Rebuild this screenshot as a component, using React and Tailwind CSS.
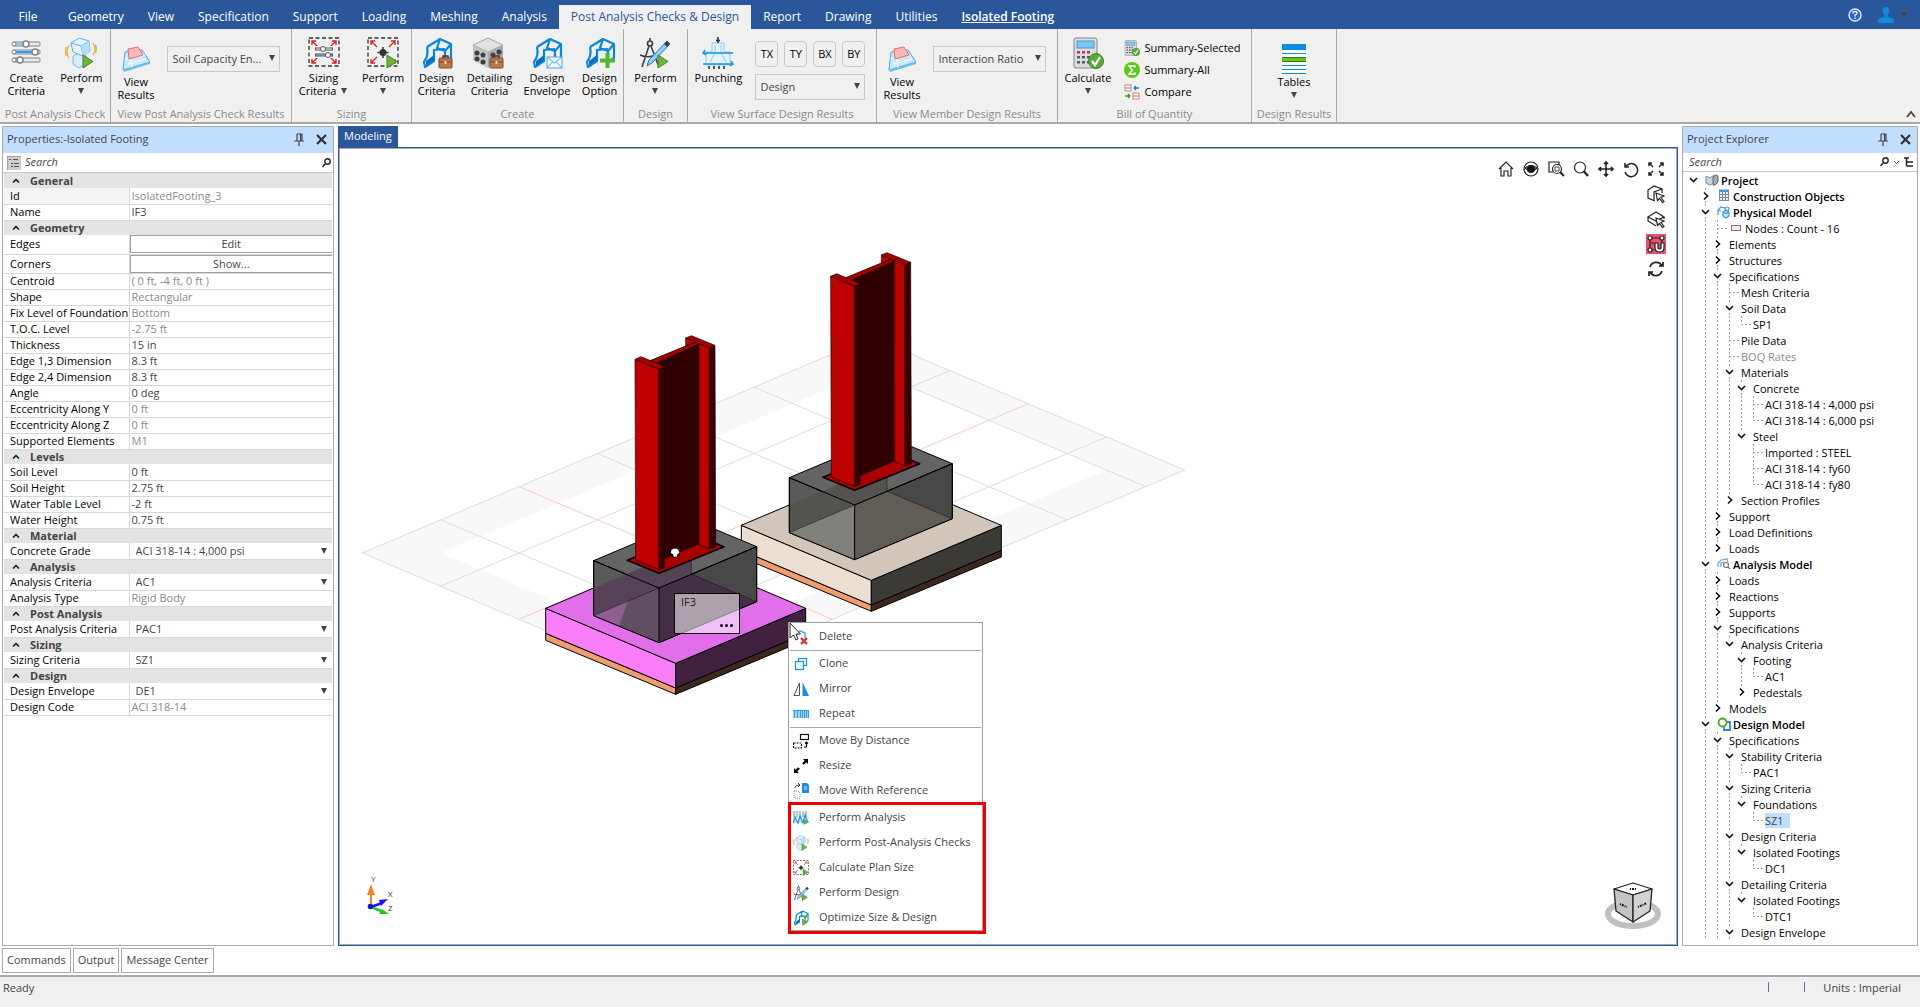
import { useState } from 'react'
import { clsx } from 'clsx'

const TABS = [
  'Geometry', 'View', 'Specification', 'Support', 'Loading', 'Meshing', 'Analysis',
  'Post Analysis Checks & Design', 'Report', 'Drawing', 'Utilities', 'Isolated Footing',
]

// kind: button | select | undefined (plain), dim = read only value
const PROPERTIES = [
  { title: 'General', rows: [
    { label: 'Id', value: 'IsolatedFooting_3', dim: true, active: true },
    { label: 'Name', value: 'IF3' },
  ] },
  { title: 'Geometry', rows: [
    { label: 'Edges', value: 'Edit', kind: 'button' },
    { label: 'Corners', value: 'Show...', kind: 'button' },
    { label: 'Centroid', value: '( 0 ft, -4 ft, 0 ft )', dim: true },
    { label: 'Shape', value: 'Rectangular', dim: true },
    { label: 'Fix Level of Foundation', value: 'Bottom', dim: true },
    { label: 'T.O.C. Level', value: '-2.75 ft', dim: true },
    { label: 'Thickness', value: '15 in' },
    { label: 'Edge 1,3 Dimension', value: '8.3 ft' },
    { label: 'Edge 2,4 Dimension', value: '8.3 ft' },
    { label: 'Angle', value: '0 deg' },
    { label: 'Eccentricity Along Y', value: '0 ft', dim: true },
    { label: 'Eccentricity Along Z', value: '0 ft', dim: true },
    { label: 'Supported Elements', value: 'M1', dim: true },
  ] },
  { title: 'Levels', rows: [
    { label: 'Soil Level', value: '0 ft' },
    { label: 'Soil Height', value: '2.75 ft' },
    { label: 'Water Table Level', value: '-2 ft' },
    { label: 'Water Height', value: '0.75 ft' },
  ] },
  { title: 'Material', rows: [{ label: 'Concrete Grade', value: 'ACI 318-14 : 4,000 psi', kind: 'select' }] },
  { title: 'Analysis', rows: [
    { label: 'Analysis Criteria', value: 'AC1', kind: 'select' },
    { label: 'Analysis Type', value: 'Rigid Body', dim: true },
  ] },
  { title: 'Post Analysis', rows: [{ label: 'Post Analysis Criteria', value: 'PAC1', kind: 'select' }] },
  { title: 'Sizing', rows: [{ label: 'Sizing Criteria', value: 'SZ1', kind: 'select' }] },
  { title: 'Design', rows: [
    { label: 'Design Envelope', value: 'DE1', kind: 'select' },
    { label: 'Design Code', value: 'ACI 318-14', dim: true },
  ] },
]

// [level, label, state, icon] where state is open | closed | leaf
const TREE = [
  [0, 'Project', 'open', 'project'],
  [1, 'Construction Objects', 'closed', 'construction'],
  [1, 'Physical Model', 'open', 'physical'],
  [2, 'Nodes : Count - 16', 'leaf', 'nodes'],
  [2, 'Elements', 'closed'],
  [2, 'Structures', 'closed'],
  [2, 'Specifications', 'open'],
  [3, 'Mesh Criteria', 'leaf'],
  [3, 'Soil Data', 'open'],
  [4, 'SP1', 'leaf'],
  [3, 'Pile Data', 'leaf'],
  [3, 'BOQ Rates', 'leaf'],
  [3, 'Materials', 'open'],
  [4, 'Concrete', 'open'],
  [5, 'ACI 318-14 : 4,000 psi', 'leaf'],
  [5, 'ACI 318-14 : 6,000 psi', 'leaf'],
  [4, 'Steel', 'open'],
  [5, 'Imported : STEEL', 'leaf'],
  [5, 'ACI 318-14 : fy60', 'leaf'],
  [5, 'ACI 318-14 : fy80', 'leaf'],
  [3, 'Section Profiles', 'closed'],
  [2, 'Support', 'closed'],
  [2, 'Load Definitions', 'closed'],
  [2, 'Loads', 'closed'],
  [1, 'Analysis Model', 'open', 'analysis'],
  [2, 'Loads', 'closed'],
  [2, 'Reactions', 'closed'],
  [2, 'Supports', 'closed'],
  [2, 'Specifications', 'open'],
  [3, 'Analysis Criteria', 'open'],
  [4, 'Footing', 'open'],
  [5, 'AC1', 'leaf'],
  [4, 'Pedestals', 'closed'],
  [2, 'Models', 'closed'],
  [1, 'Design Model', 'open', 'design'],
  [2, 'Specifications', 'open'],
  [3, 'Stability Criteria', 'open'],
  [4, 'PAC1', 'leaf'],
  [3, 'Sizing Criteria', 'open'],
  [4, 'Foundations', 'open'],
  [5, 'SZ1', 'leaf'],
  [3, 'Design Criteria', 'open'],
  [4, 'Isolated Footings', 'open'],
  [5, 'DC1', 'leaf'],
  [3, 'Detailing Criteria', 'open'],
  [4, 'Isolated Footings', 'open'],
  [5, 'DTC1', 'leaf'],
  [3, 'Design Envelope', 'open'],
]

// true when another node of the same level follows under the same parent
function continues(index, level) {
  for (let i = index + 1; i < TREE.length; i++) {
    if (TREE[i][0] === level) return true
    if (TREE[i][0] < level) return false
  }
  return level <= 3
}

/* ---------- small shared pieces ---------- */

function Caret({ className }) {
  return (
    <svg width="8" height="6" viewBox="0 0 8 6" className={className} aria-hidden="true">
      <path d="M1 0h6L4 6z" fill="#444" />
    </svg>
  )
}

function PlayBadge({ x = 19, y = 18 }) {
  return <path d={`M${x} ${y}v13l10-6.5z`} fill="#6fb43c" stroke="#3f8a1e" strokeLinejoin="round" />
}

/* ---------- ribbon icons ---------- */

function SlidersIcon() {
  return (
    <svg width="32" height="32" viewBox="0 0 32 32">
      {[[7, 16, false], [15, 25, true], [23, 10, false]].map(([y, x, full]) => (
        <g key={y} stroke="#7c858c" fill="#fff">
          <rect x="3" y={y - 2} width="27" height="4" rx="1" fill="#e8eaec" />
          <rect x="6" y={y - 1} width={x - 6} height="2" stroke="none" fill={full ? '#2f9be6' : '#8cc8f0'} />
          <circle cx="4" cy={y} r="2" />
          <circle cx={x} cy={y} r="3" strokeWidth="1.5" />
        </g>
      ))}
    </svg>
  )
}

function CubesPlayIcon({ size = 32 }) {
  return (
    <svg width={size} height={size} viewBox="0 0 32 32">
      <g fill="none" stroke="#f0b050" strokeWidth="1.4">
        <path d="M4 8q-4 7 0 13M1.500 10q-2 5 0 9M28 6q4 6 0 12M30.500 8q2 4 0 8" />
      </g>
      <path d="M8 19l6-3 7 3v8l-7 4-6-4z" fill="#d6edfb" stroke="#74b9e6" />
      <path d="M6 6l8-5 10 3 1 10-7 5-10-4z" fill="#e6f5fe" stroke="#5eb0e6" />
      <path d="M6 6l10 3 8-5M16 9l2 10" fill="none" stroke="#5eb0e6" />
      <path d="M16 9l8-5 1 10-7 5z" fill="#b5defa" />
      <PlayBadge x={18} y={18} />
    </svg>
  )
}

function ViewResultsIcon() {
  return (
    <svg width="32" height="26" viewBox="0 0 32 26">
      <path d="M5 6l17-2 8 12-27 8z" fill="#cbe9fb" stroke="#46a9e4" strokeLinejoin="round" />
      <path d="M3 24l27-8v2L4 26z" fill="#6cc0f0" />
      <path d="M8 18l18-5M10 7l2 15M4.500 13l20-4" stroke="#fff" fill="none" />
      <path d="M8 3l10-2 5 8-14 4z" fill="#fbb9b9" stroke="#e26a6a" strokeLinejoin="round" />
    </svg>
  )
}

function SizingFrame() {
  return (
    <>
      <rect x="1" y="1" width="30" height="28" fill="none" stroke="#333" strokeWidth="1.300" strokeDasharray="4 2.500" />
      <g stroke="#d22" strokeWidth="1.400" fill="none">
        <path d="M10 10L4 4M4 8V4h4M22 10l6-6M24 4h4v4M10 20l-6 6M4 22v4h4M22 20l6 6M28 22v4h-4" />
      </g>
    </>
  )
}

function SizingCriteriaIcon() {
  return (
    <svg width="32" height="32" viewBox="0 0 32 32">
      <SizingFrame />
      <rect x="6" y="9" width="20" height="12" fill="#f0f0f0" />
      <g stroke="#555" fill="#fff">
        <rect x="7.500" y="11" width="17" height="2" />
        <rect x="7.500" y="17" width="17" height="2" fill="#6ec0ee" />
        <circle cx="15" cy="12" r="2.500" /><circle cx="20" cy="18" r="2.500" />
      </g>
    </svg>
  )
}

function SizingPerformIcon({ size = 32 }) {
  return (
    <svg width={size} height={size} viewBox="0 0 32 32">
      <SizingFrame />
      <path d="M16 10v11M10.500 15.500h11" stroke="#333" strokeWidth="1.500" />
      <circle cx="16" cy="15.500" r="3.500" fill="#333" />
      <PlayBadge x={20} y={18} />
    </svg>
  )
}

function FrameShape() {
  return (
    <>
      <path d="M6 10L19 2l11 5v14l-6 4M19 2l-3 9 8 3 6-7M24 14v8" fill="none" stroke="#0b86dc" strokeWidth="2.200" strokeLinejoin="round" />
      <path d="M6 10q2 8-3 15l1 5 9-6V13l11-1" fill="none" stroke="#0b86dc" strokeWidth="2.200" strokeLinejoin="round" />
      <path d="M5 24l8-6v5l-8 6z" fill="#0b6fc0" />
    </>
  )
}

function Briefcase() {
  return (
    <g>
      <path d="M22 21v-2h5v2" fill="none" stroke="#5c3218" strokeWidth="1.500" />
      <rect x="18" y="21" width="13" height="10" rx="1" fill="#b9794f" stroke="#7d4a28" />
      <path d="M18 25h13" stroke="#7d4a28" /><rect x="23.500" y="24" width="2" height="3" fill="#f3d9a4" />
    </g>
  )
}

function DesignIcon({ badge, size = 32 }) {
  return (
    <svg width={size} height={size} viewBox="0 0 32 32">
      <FrameShape />
      {badge === 'case' && <Briefcase />}
      {badge === 'mail' && (
        <g fill="#eef8ff" stroke="#4aa9e6"><rect x="16" y="20" width="15" height="11" /><path d="M16 20l7.500 6 7.500-6M16 31l5.500-6M31 31l-5.500-6" fill="none" /></g>
      )}
      {badge === 'plus' && <path d="M23.500 16v15M16 23.500h15" stroke="#54b52c" strokeWidth="4" />}
      {badge === 'play' && <><path d="M20 12l4 4 7-8" fill="none" stroke="#54b52c" strokeWidth="3" /><PlayBadge /></>}
    </svg>
  )
}

function DetailingIcon() {
  return (
    <svg width="34" height="32" viewBox="0 0 34 32">
      <path d="M16 1l15 7v15l-15 8-15-8V8z" fill="#c3c6c9" />
      <path d="M16 1l15 7-15 7L1 8z" fill="#dfe1e3" stroke="#a7abae" />
      <path d="M16 15v16l15-8V8z" fill="#a9adb1" />
      <g fill="#3d4144">
        <circle cx="5" cy="16" r="2.500" /><circle cx="11" cy="18" r="2.500" /><circle cx="5" cy="22" r="2.500" /><circle cx="11" cy="25" r="2.500" />
        <circle cx="21" cy="18" r="2.500" /><circle cx="27" cy="15" r="2.500" />
      </g>
      <Briefcase />
    </svg>
  )
}

function CompassIcon({ size = 32 }) {
  return (
    <svg width={size} height={size} viewBox="0 0 32 32">
      <g fill="none" stroke="#3b4046" strokeWidth="1.600">
        <path d="M11 1v3M10 9L3 30M12 9l8 21M1 18q9 4 19-1" />
        <circle cx="11" cy="6.500" r="2.500" />
      </g>
      <path d="M28 4l3 3L13 26l-5 3 2-6z" fill="#8cd0f8" stroke="#2878b8" />
      <path d="M28 4l3 3-3 3-3-3z" fill="#3b4046" />
      <PlayBadge />
    </svg>
  )
}

function PunchingIcon() {
  return (
    <svg width="32" height="32" viewBox="0 0 32 32">
      <path d="M10 6h12v9h6v13H4V15h6z" fill="#e2f3fd" stroke="#8acbf2" />
      <path d="M13 8v8l-5 9M19 8v8l5 9" fill="none" stroke="#8acbf2" />
      <path d="M1 16h30M1 27h30M3 13l-2 3 3 2M29 24l2 3-3 2" fill="none" stroke="#1c8fdb" strokeWidth="1.400" />
      <path d="M16 0v6M14 3.500h4" stroke="#234" strokeWidth="1.600" />
      <path d="M7 29v3M12 29v3M17 29v3M22 29v3" stroke="#234" strokeWidth="1.600" />
    </svg>
  )
}

function CalculatorIcon({ size = 32 }) {
  return (
    <svg width={size} height={size} viewBox="0 0 32 32">
      <rect x="2" y="1" width="23" height="30" rx="2" fill="#d9dde0" stroke="#7f878e" />
      <rect x="5" y="4" width="17" height="7" fill="#7cc6f3" stroke="#4c98c8" />
      {[14, 19, 24].map((y) => [5, 10, 15].map((x) => (
        <rect key={`${x}-${y}`} x={x} y={y} width="3" height="2.500" fill={y === 14 ? '#c83434' : '#555c62'} />
      )))}
      <circle cx="24" cy="24" r="7.500" fill="#5aa83a" stroke="#3f8028" />
      <path d="M20 24l3 4 5-8" fill="none" stroke="#fff" strokeWidth="2.200" />
    </svg>
  )
}

function SigmaIcon() {
  return (
    <svg width="16" height="16" viewBox="0 0 16 16">
      <circle cx="8" cy="8" r="8" fill="#5cc81e" />
      <path d="M11 5.500V4H5l3.500 4L5 12h6v-1.500" fill="none" stroke="#fff" strokeWidth="1.400" />
    </svg>
  )
}

function CompareIcon() {
  return (
    <svg width="16" height="16" viewBox="0 0 16 16">
      <rect x="1" y="1" width="6" height="6" fill="#fff" stroke="#e07878" /><path d="M1 4h6" stroke="#888" />
      <rect x="9" y="9" width="6" height="6" fill="#fff" stroke="#e07878" /><path d="M9 12h6" stroke="#888" />
      <path d="M15 4h-5M12 2l-2 2 2 2" stroke="#1c7fc8" fill="none" strokeWidth="1.300" />
      <path d="M1 12h5M4 10l2 2-2 2" stroke="#3f9a1e" fill="none" strokeWidth="1.300" />
    </svg>
  )
}

function TablesIcon() {
  return (
    <svg width="24" height="30" viewBox="0 0 24 30" shapeRendering="crispEdges">
      <rect width="24" height="30" fill="#fff" />
      <rect width="24" height="6" fill="#0c8ce0" />
      <path d="M0 9.500h24M0 21.500h24M0 25.500h24M0 29.500h24" stroke="#0c8ce0" />
      <rect y="13" width="24" height="5" fill="#35791a" />
      <rect y="14" width="24" height="3" fill="#5cc81e" />
    </svg>
  )
}

/* ---------- ribbon ---------- */

function RibbonGroup({ title, width, children }) {
  return (
    <section className={clsx('flex shrink-0 flex-col border-r border-[#a9a9a9]', width)}>
      <div className="flex h-[77px] justify-around">{children}</div>
      <h2 className="text-center text-[11px] leading-4 whitespace-nowrap text-[#8a8a8a]">{title}</h2>
    </section>
  )
}

// arrow: 'below' puts the caret on its own line, 'inline' after the last word
function RibbonButton({ icon, lines, arrow, low }) {
  return (
    <button className={clsx('flex flex-col items-center text-[11px] leading-[13px] text-black hover:bg-[#d5e5f7]', low ? 'pt-[14px]' : 'pt-[6px]')}>
      <span className={clsx('flex items-center justify-center', low ? 'h-8' : 'h-[36px]')}>{icon}</span>
      {lines.map((line, i) => (
        <span key={line} className="flex items-center gap-1 whitespace-nowrap">
          {line}
          {arrow === 'inline' && i === lines.length - 1 && <Caret />}
        </span>
      ))}
      {arrow === 'below' && <Caret className="mt-1" />}
    </button>
  )
}

function Combo({ label, value, className }) {
  return (
    <span className={clsx('relative block h-[26px]', className)}>
      <select aria-label={label} className="h-full w-full appearance-none border border-[#c8c8c8] bg-[#f0f0f0] pr-3 pl-1 text-[11px] text-[#444]">
        <option>{value}</option>
      </select>
      <Caret className="pointer-events-none absolute top-2.5 right-1" />
    </span>
  )
}

function TitleBar() {
  const [active, setActive] = useState('Post Analysis Checks & Design')
  return (
    <header className="flex h-[29px] items-end bg-[#2a579a] text-xs text-white">
      <button className="h-6 w-14">File</button>
      <nav className="flex flex-1 items-end">
        {TABS.map((tab) => (
          <button
            key={tab}
            onClick={() => setActive(tab)}
            className={clsx(
              'h-6 px-3 whitespace-nowrap',
              tab === active && 'bg-[#f0f0f0] text-[#2a579a]',
              tab === 'Isolated Footing' && 'font-semibold underline',
            )}
          >
            {tab}
          </button>
        ))}
      </nav>
      <div className="flex h-full items-center gap-4 pr-3">
        <button aria-label="Help">
          <svg width="14" height="14" viewBox="0 0 14 14">
            <circle cx="7" cy="7" r="6" fill="#2a62d8" stroke="#dfe8f8" strokeWidth="1.500" />
            <path d="M5 5.500q0-2 2-2t2 1.700q0 1-2 2V8.500M7 9.500v1.500" stroke="#fff" strokeWidth="1.300" fill="none" />
          </svg>
        </button>
        <button aria-label="Account" className="flex items-center gap-1.5">
          <svg width="16" height="16" viewBox="0 0 16 16" fill="#0c8ce0">
            <path d="M8 0q4 0 3.500 4.500Q11 7 9.500 8v2q6 1 6.500 3v3H0v-3q.5-2 6.500-3V8Q5 7 4.500 4.500 4 0 8 0z" />
          </svg>
          <Caret />
        </button>
      </div>
    </header>
  )
}

function Ribbon() {
  return (
    <div className="flex h-[95px] border-b-2 border-[#a9a9a9] bg-[#f0f0f0]">
      <RibbonGroup title="Post Analysis Check" width="w-[111px]">
        <RibbonButton icon={<SlidersIcon />} lines={['Create', 'Criteria']} />
        <RibbonButton icon={<CubesPlayIcon />} lines={['Perform']} arrow="below" />
      </RibbonGroup>
      <RibbonGroup title="View Post Analysis Check Results" width="w-[181px]">
        <RibbonButton icon={<ViewResultsIcon />} lines={['View', 'Results']} low />
        <Combo label="Post analysis result" value="Soil Capacity En..." className="mt-4 mr-1 w-[113px]" />
      </RibbonGroup>
      <RibbonGroup title="Sizing" width="w-[120px]">
        <RibbonButton icon={<SizingCriteriaIcon />} lines={['Sizing', 'Criteria']} arrow="inline" />
        <RibbonButton icon={<SizingPerformIcon />} lines={['Perform']} arrow="below" />
      </RibbonGroup>
      <RibbonGroup title="Create" width="w-[212px]">
        <RibbonButton icon={<DesignIcon badge="case" />} lines={['Design', 'Criteria']} />
        <RibbonButton icon={<DetailingIcon />} lines={['Detailing', 'Criteria']} />
        <RibbonButton icon={<DesignIcon badge="mail" />} lines={['Design', 'Envelope']} />
        <RibbonButton icon={<DesignIcon badge="plus" />} lines={['Design', 'Option']} />
      </RibbonGroup>
      <RibbonGroup title="Design" width="w-16">
        <RibbonButton icon={<CompassIcon />} lines={['Perform']} arrow="below" />
      </RibbonGroup>
      <RibbonGroup title="View Surface Design Results" width="w-[189px]">
        <RibbonButton icon={<PunchingIcon />} lines={['Punching']} />
        <div className="mr-1 flex w-[110px] flex-col gap-1.5 pt-3">
          <div className="flex justify-between">
            {['TX', 'TY', 'BX', 'BY'].map((t) => (
              <button key={t} className="h-[26px] w-[23px] rounded-sm border border-[#c8c8c8] text-[11px] text-black">{t}</button>
            ))}
          </div>
          <Combo label="Surface result" value="Design" />
        </div>
      </RibbonGroup>
      <RibbonGroup title="View Member Design Results" width="w-[181px]">
        <RibbonButton icon={<ViewResultsIcon />} lines={['View', 'Results']} low />
        <Combo label="Member result" value="Interaction Ratio" className="mt-4 mr-1 w-[113px]" />
      </RibbonGroup>
      <RibbonGroup title="Bill of Quantity" width="w-[194px]">
        <RibbonButton icon={<CalculatorIcon />} lines={['Calculate']} arrow="below" />
        <div className="mr-1 flex flex-col gap-1.5 pt-[11px] text-[11px] leading-4 text-black">
          <button className="flex items-center gap-1"><CalculatorIcon size={16} />Summary-Selected</button>
          <button className="flex items-center gap-1"><SigmaIcon />Summary-All</button>
          <button className="flex items-center gap-1"><CompareIcon />Compare</button>
        </div>
      </RibbonGroup>
      <RibbonGroup title="Design Results" width="w-[85px]">
        <RibbonButton icon={<TablesIcon />} lines={['Tables']} arrow="below" low />
      </RibbonGroup>
      <button aria-label="Collapse ribbon" className="mt-auto mr-1 mb-1 ml-auto">
        <svg width="10" height="8" viewBox="0 0 10 8"><path d="M1 7l4-5 4 5" fill="none" stroke="#444" strokeWidth="1.800" /></svg>
      </button>
    </div>
  )
}

/* ---------- panels ---------- */

function PanelHeader({ title }) {
  return (
    <div className="flex h-[26px] shrink-0 items-center bg-[#c2deff] pr-1.5 pb-0.5 pl-1">
      <h2 className="flex-1 text-[11px] text-[#444]">{title}</h2>
      <button aria-label="Pin" className="mr-3">
        <svg width="10" height="13" viewBox="0 0 10 13" fill="none" stroke="#444" strokeWidth="1.200">
          <path d="M3 1h5v7M3 1v7M6.500 1v7M0 8h10M5 8v5" />
        </svg>
      </button>
      <button aria-label="Close">
        <svg width="11" height="11" viewBox="0 0 11 11"><path d="M1 1l9 9M10 1l-9 9" stroke="#333" strokeWidth="2.200" /></svg>
      </button>
    </div>
  )
}

function MagnifierIcon() {
  return (
    <svg width="9" height="10" viewBox="0 0 9 10" fill="none" stroke="#222" strokeWidth="1.400">
      <circle cx="5.500" cy="3.500" r="2.700" /><path d="M3.500 5.500L.5 9" />
    </svg>
  )
}

function PropertyValue({ row }) {
  if (row.kind === 'button') {
    return <button className="block h-[18px] w-full border border-r-0 border-[#a0a0a0] text-[#444]">{row.value}</button>
  }
  if (row.kind === 'select') {
    return (
      <span className="relative block h-[14px]">
        <select aria-label={row.label} className="block h-full w-full appearance-none pl-1.5 text-[#444]">
          <option>{row.value}</option>
        </select>
        <Caret className="pointer-events-none absolute top-1 right-1" />
      </span>
    )
  }
  return <span className={clsx('pl-0.5', row.dim ? 'text-[#8a8a8a]' : 'text-[#444]')}>{row.value}</span>
}

function PropertiesPanel() {
  return (
    <aside className="flex w-[332px] shrink-0 flex-col border border-[#a9a9a9] bg-white">
      <PanelHeader title="Properties:-Isolated Footing" />
      <div className="flex h-[20px] shrink-0 items-center gap-1 border-b border-[#c8c8c8] pr-0.5 pl-1">
        <svg width="14" height="14" viewBox="0 0 14 14" shapeRendering="crispEdges">
          <rect width="14" height="14" fill="#cdcdcd" stroke="#a0a0a0" />
          <path d="M2 3.500h2M6 3.500h5M4 7.500h2M7 7.500h5M4 10.500h2M7 10.500h5" stroke="#555" />
        </svg>
        <input aria-label="Search properties" placeholder="Search" className="min-w-0 flex-1 text-[11px] italic placeholder:text-[#444] focus:outline-none" />
        <MagnifierIcon />
      </div>
      <table className="mx-px table-fixed border-collapse text-left text-[11px] leading-[14px]">
        <colgroup><col className="w-[125px]" /><col /></colgroup>
        {PROPERTIES.map((group) => (
          <tbody key={group.title}>
            <tr className="h-[15px] bg-[#e3e3e3]">
              <th colSpan={2} className="p-0 font-bold text-[#444]">
                <span className="flex h-[14px] items-center gap-2.5 pl-2">
                  <svg width="8" height="5" viewBox="0 0 8 5"><path d="M1 4.500l3-3 3 3" fill="none" stroke="#111" strokeWidth="1.500" /></svg>
                  {group.title}
                </span>
              </th>
            </tr>
            {group.rows.map((row) => (
              <tr key={row.label} className={clsx('border-b border-[#d8d8d8]', row.kind === 'button' ? 'h-[19px]' : 'h-4')}>
                <th className={clsx('border-r border-[#d8d8d8] p-0 pl-1.5 font-normal whitespace-nowrap text-black', row.active && 'bg-[#f4f4f4]')}>{row.label}</th>
                <td className="p-0">
                  <PropertyValue row={row} />
                </td>
              </tr>
            ))}
          </tbody>
        ))}
      </table>
    </aside>
  )
}

const TREE_ICONS = {
  project: (
    <svg width="14" height="14" viewBox="0 0 14 14">
      <path d="M1 3l4 2 4-3v8l-4 2-4-2z" fill="#c6d4de" stroke="#7d8c97" /><path d="M8 4l3-2 2 1v6l-3 3H8z" fill="#a3abb1" stroke="#666" />
    </svg>
  ),
  construction: (
    <svg width="14" height="14" viewBox="0 0 14 14" fill="none" stroke="#7d8c97">
      <rect x="2.500" y="2.500" width="9" height="9" fill="#e5eef5" /><path d="M2 1.500h10" stroke="#3c9be0" strokeWidth="2" /><path d="M2.500 5.500h9M2.500 8.500h9M5.500 3v9M8.500 3v9" />
    </svg>
  ),
  physical: (
    <svg width="14" height="14" viewBox="0 0 14 14" fill="none" stroke="#3c9be0" strokeWidth="1.200">
      <path d="M1 10V5l3-3 4 1M1 5l3 1" /><path d="M6 7l3-2 3 2v4l-3 2-3-2z" fill="#bfe2fa" /><path d="M6 7l3 1.500L12 7" /><circle cx="10" cy="4" r="2" />
    </svg>
  ),
  nodes: (
    <svg width="14" height="14" viewBox="0 0 14 14"><rect x="2.500" y="4.500" width="9" height="5" fill="#eee" stroke="#8c7070" /><path d="M2.500 4v6M11.500 4v6" stroke="#c05a5a" /></svg>
  ),
  analysis: (
    <svg width="14" height="14" viewBox="0 0 14 14" fill="none" stroke="#6aa9d4" strokeWidth="1.200">
      <path d="M1 10V6l3-3 6-1 1 3M4 10V6l3-1" /><circle cx="9" cy="8" r="2.500" stroke="#777" /><path d="M11 10l2 2" stroke="#777" />
    </svg>
  ),
  design: (
    <svg width="14" height="14" viewBox="0 0 14 14" fill="none" strokeWidth="1.800"><path d="M10 5h3v8H7v-3" stroke="#2a86d8" /><circle cx="5.500" cy="5.500" r="4" stroke="#4aa824" fill="#fff" /></svg>
  ),
}

function TreeRow({ index }) {
  const [level, label, state, icon] = TREE[index]
  const more = continues(index, level)
  const ancestors = Array.from({ length: level }, (_, k) => k > 0 && continues(index, k))
  const guide = { stroke: '#a0a0a0', strokeDasharray: '2 2', fill: 'none' }
  return (
    <li className="flex h-4 items-center whitespace-nowrap">
      {ancestors.map((on, k) => (
        <svg key={k} width="12" height="16" className="shrink-0">{on && <path d="M6.500 0v16" {...guide} />}</svg>
      ))}
      <svg width="18" height="16" viewBox="0 0 18 16" className="shrink-0">
        {level > 0 && state === 'leaf' && <path d={more ? 'M6.500 0v16M6 8.500h11' : 'M6.500 0v8.500h11'} {...guide} />}
        {level > 0 && state !== 'leaf' && <path d={more ? 'M6.500 0v3M6.500 13v3' : 'M6.500 0v3'} {...guide} />}
        {state === 'open' && <path d="M3 6l3.500 3.500L10 6" fill="none" stroke="#111" strokeWidth="1.600" />}
        {state === 'closed' && <path d="M5 4.500L8.500 8 5 11.500" fill="none" stroke="#111" strokeWidth="1.600" />}
      </svg>
      {icon && <span className="mr-0.5 shrink-0">{TREE_ICONS[icon]}</span>}
      <span
        className={clsx(
          icon && icon !== 'nodes' && 'font-semibold',
          label === 'BOQ Rates' && 'text-[#8a8a8a]',
          label === 'SZ1' && 'bg-[#c2deff] pr-1.5 text-[#444]',
        )}
      >
        {label}
      </span>
    </li>
  )
}

function ExplorerPanel() {
  return (
    <aside className="flex w-[236px] shrink-0 flex-col overflow-hidden border border-[#a9a9a9] bg-white">
      <PanelHeader title="Project Explorer" />
      <div className="flex h-[19px] shrink-0 items-center gap-1 border-b border-[#c8c8c8] pr-1 pl-1.5">
        <input aria-label="Search project" placeholder="Search" className="min-w-0 flex-1 text-[11px] italic placeholder:text-[#444] focus:outline-none" />
        <MagnifierIcon />
        <svg width="7" height="5" viewBox="0 0 7 5"><path d="M1 1l2.500 2.500L6 1" fill="none" stroke="#444" /></svg>
        <svg width="9" height="10" viewBox="0 0 9 10" fill="none" stroke="#222" strokeWidth="1.500"><path d="M0 1h5M2.500 1v8M2.500 5H9M2.500 9H9" /></svg>
      </div>
      <ul className="min-h-0 flex-1 overflow-hidden pl-1 text-[11px] leading-[15px] text-black">
        {TREE.map((_, i) => <TreeRow key={i} index={i} />)}
      </ul>
    </aside>
  )
}

/* ---------- 3D view ---------- */

function Column() {
  return (
    <g stroke="#1a0000" strokeWidth="2" strokeLinejoin="round">
      <path d="M862 991L957 1030 1152 950 1057 911z" fill="#a80000" stroke="#000" strokeWidth="5" />
      <path d="M930 392L1064 337 1077 342 1077 943 973 988 945 400z" fill="#300000" stroke="none" />
      <path d="M930 392L1064 337 1077 342 945 400z" fill="#a80000" />
      <path d="M1037 324L1064 337 1037 349z" fill="#bd0000" />
      <path d="M1077 340L1108 353V957L1077 943z" fill="#bd0000" />
      <path d="M1108 353L1125 346 1127 950 1108 957z" fill="#3a0000" />
      <path d="M1037 324L1054 317 1125 346 1108 353z" fill="#a80000" />
      <path d="M885 388L957 418V1018L887 990z" fill="#bd0000" />
      <path d="M957 418L973 411V1013L957 1018z" fill="#3a0000" />
      <path d="M885 388L903 380 973 409 957 418z" fill="#a80000" />
    </g>
  )
}

function Footing({ colors, shift, children }) {
  return (
    <g transform={shift} stroke="#000" strokeWidth="3" strokeLinejoin="round">
      <path d="M617 1210L1007 1374V1393L617 1231z" fill="#ee9c70" />
      <path d="M1397 1210L1007 1374V1393L1397 1230z" fill="#3c281f" />
      <path d="M617 1135L1007 1300V1374L617 1210z" fill={colors.left} />
      <path d="M1397 1135L1007 1300V1374L1397 1210z" fill={colors.right} />
      <path d="M617 1135L1007 970 1397 1135 1007 1300z" fill={colors.top} />
      {/* pedestal: upper half is seen against the page, lower half against the slab */}
      <path d="M761 992L1054 868 1250 950 957 1074z" fill="#646464" />
      <path d="M761 992L957 1074V1238L761 1157z" fill="#5a5a5a" />
      <path d="M957 1074L1250 950V1115L957 1238z" fill="#484848" />
      <path d="M761 1075L905 1013 957 1074 761 1157z" fill={colors.mid} stroke="none" />
      <path d="M905 1013L1054 990V1033L957 1074z" fill={colors.mid} stroke="none" />
      <path d="M761 1157L957 1074V1238z" fill={colors.low} stroke="none" />
      <path d="M957 1074L1054 1033 1250 1115 957 1238z" fill={colors.shade} stroke="none" />
      {colors.glow && <path d="M761 1157L864 1113 837 1188z" fill={colors.glow} stroke="none" />}
      <path d="M761 992V1157L957 1238 1250 1115V950M957 1074V1238M761 992L957 1074 1250 950" fill="none" />
      <path d="M761 1157L1054 1033 1250 1115M1054 985V1033" fill="none" strokeWidth="2" opacity="0.6" />
      <Column />
      {children}
    </g>
  )
}

function Scene() {
  // grid axes: u runs up-right (6.5 bays), v runs down-right (4 bays)
  const point = (u, v) => [67 + 235 * (u + v), 969 + 99.5 * (v - u)]
  const line = (a, b) => `M${a[0]} ${a[1]}L${b[0]} ${b[1]}`
  return (
    <svg className="absolute inset-0 h-full w-full" aria-label="Two isolated footings with steel columns" role="img">
      <g transform="translate(0 81) scale(0.33333)">
        <path
          fillRule="evenodd"
          fill="#f8f8f8"
          d={`M${point(0, 0)}L${point(6.5, 0)}L${point(6.5, 4)}L${point(0, 4)}zM${point(0.5, 0.5)}L${point(6, 0.5)}L${point(6, 3.5)}L${point(0.5, 3.5)}z`}
        />
        <g fill="none" stroke="#dcdcdc" strokeWidth="3">
          {[0, 1, 3, 4].map((v) => <path key={`v${v}`} d={line(point(0, v), point(6.5, v))} />)}
          {[0, 1, 3, 4, 5, 6, 6.5].map((u) => <path key={`u${u}`} d={line(point(u, 0), point(u, 4))} />)}
          <path d={line(point(0, 2), point(6.5, 2))} stroke="#fbc8c8" />
          <path d={line(point(2, 0), point(2, 4))} stroke="#fbc8c8" />
        </g>
        <Footing shift="translate(587 -249)" colors={{ top: '#d1c6b9', left: '#eadfd1', right: '#3c3a34', mid: '#555350', low: '#82807b', shade: '#625c57' }} />
        <Footing colors={{ top: '#e06fe9', left: '#fa7dfa', right: '#42203f', mid: '#554257', low: '#604e62', shade: '#443046', glow: '#8e5f92' }}>
          <circle cx="1005" cy="968" r="14" fill="#fff" />
          <path d="M991 968a14 14 0 0 0 10 13l-2-8zM1019 968a14 14 0 0 1-8 13l1-8z" fill="#000" stroke="none" />
        </Footing>
      </g>
    </svg>
  )
}

function AxisTriad() {
  return (
    <svg width="36" height="48" viewBox="0 -4 36 48" className="absolute bottom-6 left-6">
      <path d="M7 31V14" stroke="#ff7f27" strokeWidth="2" /><path d="M7 8l4 11H3z" fill="#ff7f27" />
      <path d="M7 31l11-4" stroke="#1414ff" strokeWidth="2.500" /><path d="M24 23l-9 1 2 6z" fill="#1414ff" />
      <path d="M7 31l10 4" stroke="#22c522" strokeWidth="2.500" /><path d="M25 38l-10 0 3-5z" fill="#22c522" />
      <circle cx="6.500" cy="30.500" r="2.800" fill="#1414c8" />
      <g fontSize="8" fill="#333"><text x="7" y="6">Y</text><text x="24" y="21">X</text><text x="24" y="35">Z</text></g>
    </svg>
  )
}

function ViewCube() {
  return (
    <svg width="58" height="52" viewBox="0 0 58 52" className="absolute right-3.5 bottom-3">
      <ellipse cx="29" cy="34" rx="25" ry="12" fill="none" stroke="#c0c0c0" strokeWidth="6" />
      <g stroke="#222" strokeWidth="1.300" strokeLinejoin="round">
        <path d="M10 9L29 3 48 9 29 15z" fill="#fff" />
        <path d="M10 9L29 15V42L12 31z" fill="#c4c4c4" />
        <path d="M48 9L29 15V42L46 31z" fill="#d2d2d2" />
      </g>
      <g stroke="#111" strokeWidth="2" strokeDasharray="1 1 2 1">
        <path d="M26 9h6M16 24l7 3M34 27l9-4" />
      </g>
    </svg>
  )
}

const VIEW_ICONS = {
  Home: <path d="M3 10l7-7 7 7M5 9v8h3v-5h4v5h3V9" />,
  Look: <><circle cx="10" cy="10" r="7" /><path d="M4 9q6-5 12 0-6 6-12 0z" fill="#fff" /><circle cx="10" cy="10" r="3.500" fill="#111" /></>,
  'Zoom window': <><path d="M13 6V3H3v10h4" /><circle cx="11" cy="10" r="4.500" /><path d="M14 13l4 4" strokeWidth="2" /><path d="M9 8h4v4H9z" strokeWidth=".8" /></>,
  Zoom: <><circle cx="9" cy="8.500" r="5.500" /><path d="M13 12.500l4 4.500" strokeWidth="2.400" /></>,
  Pan: <path d="M10 3v14M3 10h14M8 5l2-2 2 2M8 15l2 2 2-2M5 8l-2 2 2 2M15 8l2 2-2 2" strokeWidth="1.600" />,
  Rotate: <path d="M4 4v4h4M4.500 8a6.500 6.500 0 1 1-.5 5" strokeWidth="1.500" />,
  Fit: <path d="M3 7V4h3M3.500 4.500L7 8M17 7V4h-3M16.500 4.500L13 8M3 13v3h3M3.500 15.500L7 12M17 13v3h-3M16.500 15.500L13 12" strokeWidth="1.500" />,
}

const SIDE_ICONS = {
  'Select solid': <><path d="M9 17l-7-3V6l6-4 8 3v4M8 17V8l8-3" /><path d="M10 9l8 3-3 1.500 3 4-1.500 1-3-4-2 2z" fill="#fff" /></>,
  'Select surface': <><path d="M2 8l8-5 8 5-8 4zM2 8v4l8 5M18 8v2" /><path d="M10 9l8 3-3 1.500 3 4-1.500 1-3-4-2 2z" fill="#fff" /></>,
  Snap: <><path d="M4 4h12v12M4 4v12h4M5 9h3" /><g fill="#fff"><circle cx="4" cy="4" r="2" /><circle cx="16" cy="4" r="2" /><circle cx="4" cy="16" r="2" /></g><path d="M9 9v5q0 4 4.500 4t4.500-4V9h-3v5q0 1-1.500 1T12 14V9z" fill="#fff" /></>,
  Refresh: <path d="M4 8a6.500 6.500 0 0 1 12-1M17 3v4h-4M16 12a6.500 6.500 0 0 1-12 1M3 17v-4h4" strokeWidth="1.700" />,
}

function ViewButton({ name, children, active }) {
  return (
    <button aria-label={name} className={clsx('h-5 w-5', active && 'bg-[#e9536f]')}>
      <svg width="20" height="20" viewBox="0 0 20 20" fill="none" stroke="#222" strokeWidth="1.200">{children}</svg>
    </button>
  )
}

/* ---------- context menu ---------- */

const MENU_ICONS = {
  Delete: <><path d="M3 6l4-4 5 2v5" fill="none" stroke="#4aa9e6" strokeWidth="1.500" /><path d="M8 9l6 6M14 9l-6 6" stroke="#d93030" strokeWidth="2.400" /></>,
  Clone: <g fill="#eef8ff" stroke="#1c8fdb" strokeWidth="1.200"><rect x="5.500" y="2.500" width="8" height="7" /><rect x="2.500" y="5.500" width="8" height="8" /></g>,
  Mirror: <><path d="M6.500 2v12.500H1z" fill="#fff" stroke="#555" /><path d="M9.500 1v14H16z" fill="#1c8fdb" /></>,
  Repeat: <><rect y="4" width="16" height="8" fill="#9fd4f6" /><path d="M0 4.500h16M4.500 4v8M7.500 4v8M9.500 4v8M11.500 4v8M13.500 4v8M15.500 4v8M1.500 4v8" stroke="#1c8fdb" strokeWidth=".8" /></>,
  'Move By Distance': <g fill="none" stroke="#111" strokeWidth="1.200"><rect x="7.500" y="1.500" width="8" height="5" /><rect x=".5" y="10" width="8" height="5" strokeDasharray="2 1" /><path d="M11 14h2.500V9M12 10.500L13.500 9l1.500 1.500" /></g>,
  Resize: <g stroke="#000" strokeWidth="2.400" fill="#000"><path d="M10 6l3-3M3 13l3-3" /><path d="M10 1h5v5zM1 10v5h5z" stroke="none" /></g>,
  'Move With Reference': <><path d="M2 5q0-3 5-3M5 0l2 2-2 2" fill="none" stroke="#333" /><path d="M1 8h4l2 2v5H1z" fill="none" stroke="#777" strokeDasharray="1 1" /><path d="M9 0h5l2 2v8H9z" fill="#1c8fdb" /><path d="M11 4h3M11 6h3" stroke="#bfe2fa" /></>,
  'Perform Analysis': <><path d="M0 1h16v8H0z" fill="#e8eef2" /><path d="M1 1v6M4 1v6M7 1v6M10 1v6M13 1v6" stroke="#8a979f" /><path d="M0 13l2-6 3 6 2-7 3 7 2-8 3 8" fill="#bfe2fa" stroke="#1c8fdb" strokeWidth="1.200" /><path d="M11 9v6l5-3z" fill="#5fb336" /></>,
}

const MENU = [
  ['Delete'],
  ['Clone', 'Mirror', 'Repeat'],
  ['Move By Distance', 'Resize', 'Move With Reference'],
  ['Perform Analysis', 'Perform Post-Analysis Checks', 'Calculate Plan Size', 'Perform Design', 'Optimize Size & Design'],
]

function menuIcon(name) {
  if (name === 'Perform Post-Analysis Checks') return <CubesPlayIcon size={16} />
  if (name === 'Calculate Plan Size') return <SizingPerformIcon size={16} />
  if (name === 'Perform Design') return <CompassIcon size={16} />
  if (name === 'Optimize Size & Design') return <DesignIcon badge="play" size={16} />
  return <svg width="16" height="16" viewBox="0 0 16 16">{MENU_ICONS[name]}</svg>
}

function ContextMenu() {
  return (
    <div className="absolute top-[473px] left-[448px] w-[195px] border border-[#a0a0a0] bg-white pt-px text-[11px] text-[#444]">
      {MENU.map((group, i) => (
        <div key={group[0]} className="relative">
          {i > 0 && <div className="mx-px mt-px h-px bg-[#a9a9a9]" />}
          {group.map((item) => (
            <button key={item} className="flex h-[25px] w-full items-center gap-2.5 pl-1 text-left whitespace-nowrap hover:bg-[#e5f1fb]">
              {menuIcon(item)}
              {item}
            </button>
          ))}
          {i === MENU.length - 1 && <div className="pointer-events-none absolute -top-0.5 -right-1 -bottom-1 -left-px border-[3px] border-[#ee0000]" />}
        </div>
      ))}
      <svg width="12" height="18" viewBox="0 0 12 18" className="absolute top-0 left-0">
        <path d="M1 0v15l3.500-3L7 17l2-1-2-5h4.500z" fill="#fff" stroke="#222" />
      </svg>
    </div>
  )
}

function ModelingView() {
  return (
    <main className="flex min-w-0 flex-1 flex-col">
      <div className="flex h-[21px] shrink-0">
        <button className="bg-[#2a579a] px-1.5 text-[11px] text-white">Modeling</button>
      </div>
      <div className="flex flex-1 border border-[#2a579a]">
        <div className="relative flex-1 overflow-hidden border border-[#a9a9a9] bg-white">
          <Scene />
          <div className="absolute top-[444px] left-[334px] flex h-[41px] w-[66px] flex-col justify-between border border-black bg-white/55 px-1.5 text-[11px] leading-4 text-[#222]">
            <span>IF3</span>
            <svg width="13" height="3" viewBox="0 0 13 3" className="mb-1.5 self-end"><circle cx="1.500" cy="1.500" r="1.500" /><circle cx="6.500" cy="1.500" r="1.500" /><circle cx="11.500" cy="1.500" r="1.500" /></svg>
          </div>
          <div className="absolute top-2.5 right-2.5 flex flex-col items-end gap-[5px]">
            <div className="flex gap-[5px]">
              {Object.entries(VIEW_ICONS).map(([name, art]) => <ViewButton key={name} name={name}>{art}</ViewButton>)}
            </div>
            {Object.entries(SIDE_ICONS).map(([name, art]) => <ViewButton key={name} name={name} active={name === 'Snap'}>{art}</ViewButton>)}
          </div>
          <AxisTriad />
          <ViewCube />
          <ContextMenu />
        </div>
      </div>
    </main>
  )
}

export default function App() {
  return (
    <div className="flex h-screen flex-col overflow-hidden bg-white font-['Open_Sans',sans-serif]">
      <TitleBar />
      <Ribbon />
      <div className="flex min-h-0 flex-1 gap-1 px-0.5 pt-0.5">
        <PropertiesPanel />
        <ModelingView />
        <ExplorerPanel />
      </div>
      <div className="flex gap-0.5 p-0.5">
        {['Commands', 'Output', 'Message Center'].map((t) => (
          <button key={t} className="h-[25px] border border-[#a9a9a9] px-1 text-[11px] text-[#444]">{t}</button>
        ))}
      </div>
      <footer className="flex h-8 items-start border-t-2 border-[#a9a9a9] bg-[#f0f0f0] px-[3px] pt-[3px] text-[11px] leading-4 text-[#444]">
        <span className="flex-1">Ready</span>
        <span className="mt-0.5 mr-[35px] h-2.5 w-px bg-[#6a6aa8]" />
        <span className="mt-0.5 mr-[18px] h-2.5 w-px bg-[#6a6aa8]" />
        <span className="pr-4">Units : Imperial</span>
      </footer>
    </div>
  )
}
